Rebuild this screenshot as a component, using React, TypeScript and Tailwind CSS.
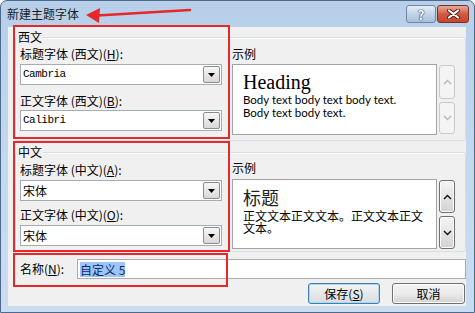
import type { ReactNode } from "react";

function Caret({ up, dim }: { up?: boolean; dim?: boolean }) {
  return (
    <svg width="9" height="6" viewBox="0 0 9 6">
      <polyline
        points={up ? "1,5 4.5,1.5 8,5" : "1,1 4.5,4.5 8,1"}
        fill="none"
        stroke={dim ? "#b8b8b8" : "#111"}
        strokeWidth="1.4"
      />
    </svg>
  );
}

function Spin({ up, dim, size }: { up?: boolean; dim?: boolean; size: string }) {
  return (
    <div
      className={`flex w-[16px] items-center justify-center rounded-[3px] border ${size} ${
        dim
          ? "border-[#c9c9c9] bg-[#f4f4f4]"
          : "border-[#707070] bg-gradient-to-b from-[#f5f5f5] to-[#d3d3d3] shadow-[inset_0_0_0_1px_#fcfcfc]"
      }`}
    >
      <Caret up={up} dim={dim} />
    </div>
  );
}

function Combo({ children, mono }: { children: ReactNode; mono?: boolean }) {
  return (
    <div className="flex h-[21px] w-[202px] items-center border border-[#a5acb5] bg-white pl-[2px] pr-[1px]">
      <span
        className={
          mono
            ? "font-['Liberation_Mono',monospace] text-[11px] tracking-[-0.5px]"
            : "leading-[16px]"
        }
      >
        {children}
      </span>
      <div className="ml-auto flex h-[17px] w-[17px] items-center justify-center rounded-[2px] border border-[#8a8c8e] bg-gradient-to-b from-[#f7f7f7] to-[#d8d8d8]">
        <svg width="7" height="4" viewBox="0 0 7 4">
          <polygon points="0,0 7,0 3.5,4" fill="#000" />
        </svg>
      </div>
    </div>
  );
}

function Label({ children, className = "" }: { children: ReactNode; className?: string }) {
  return <div className={`h-[16px] leading-[16px] ${className}`}>{children}</div>;
}

function Group({ title, children, className }: { title: string; children: ReactNode; className: string }) {
  return (
    <div
      className={`relative ml-[7px] w-[451px] rounded-[3px] border border-[#d5dfe5] shadow-[inset_1px_1px_0_#fff] ${className}`}
    >
      <span className="absolute left-[1px] top-[-9px] bg-[#f0f0f0] px-[1px] leading-[16px]">{title}</span>
      <div className="flex pl-[4px]">{children}</div>
    </div>
  );
}

function Button({ children, focused }: { children: ReactNode; focused?: boolean }) {
  return (
    <div
      className={`flex h-[21px] items-center justify-center rounded-[3px] border ${
        focused
          ? "w-[72px] border-[#3c7fb1] bg-gradient-to-b from-[#f4f4f4] to-[#d9dde0] shadow-[inset_0_0_0_1px_#a8d8f4]"
          : "w-[73px] border-[#707070] bg-gradient-to-b from-[#f3f3f3] via-[#ebebeb] to-[#d2d2d2] shadow-[inset_0_0_0_1px_#fbfbfb]"
      }`}
    >
      {children}
    </div>
  );
}

export default function App() {
  return (
    <div className="relative h-[313px] w-[475px] overflow-hidden bg-white font-['Noto_Sans_CJK_SC',sans-serif] text-[12px] text-black">
      <div className="flex h-full flex-col rounded-t-[7px] border border-[#4d6a8c] bg-gradient-to-b from-[#b7cfe9] via-[#c4d8ee] to-[#c9dcf0] px-[7px] pb-[6px] pr-[8px]">
        {/* title bar */}
        <div className="flex h-[26px] items-start">
          <span className="mt-[5px] leading-[16px] text-[#1a1a1a]" style={{ marginLeft: -1 }}>
            新建主题字体
          </span>
          <div className="ml-auto mr-[-3px] mt-[4px] flex gap-[1px]">
            <div className="flex h-[18px] w-[30px] items-center justify-center rounded-[3px] border border-[#6b86a6] bg-gradient-to-b from-[#e4edf7] via-[#c3d4e8] to-[#a9bfd9] text-[13px] font-bold leading-none text-white [text-shadow:0_0_1px_#27415f,0_0_1px_#27415f,0_0_1px_#27415f]">
              ?
            </div>
            <div className="flex h-[18px] w-[32px] items-center justify-center rounded-[3px] border border-[#7a2f25] bg-gradient-to-b from-[#e9a99a] via-[#d05a40] to-[#c8452c]">
              <svg width="13" height="10" viewBox="0 0 13 10">
                <path d="M2 1.5 L11 8.5 M11 1.5 L2 8.5" stroke="#5a1d14" strokeWidth="4" strokeLinecap="round" />
                <path d="M2 1.5 L11 8.5 M11 1.5 L2 8.5" stroke="#fff" strokeWidth="2.2" strokeLinecap="round" />
              </svg>
            </div>
          </div>
        </div>

        {/* client area */}
        <div className="flex h-[279px] w-[458px] flex-col bg-[#f0f0f0]">
          <Group title="西文" className="mt-[10px] h-[104px]">
            <div className="flex w-[202px] flex-col pt-[8px]">
              <Label>
                标题字体 (西文)(<u>H</u>):
              </Label>
              <div className="mt-[2px]">
                <Combo mono>Cambria</Combo>
              </div>
              <Label className="mt-[8px]">
                正文字体 (西文)(<u>B</u>):
              </Label>
              <div className="mt-[1px]">
                <Combo mono>Calibri</Combo>
              </div>
            </div>
            <div className="ml-[10px] flex flex-col pt-[8px]">
              <Label>示例</Label>
              <div className="mt-[2px] flex">
                <div className="h-[71px] w-[205px] border border-[#a3a3a3] bg-white pl-[10px] pt-[6px]">
                  <div className="font-['Liberation_Serif',serif] text-[20px] leading-[22px]">Heading</div>
                  <div className="font-['Lato',sans-serif] text-[11.5px] leading-[13px]">
                    Body text body text body text.
                    <br />
                    Body text body text.
                  </div>
                </div>
                <div className="ml-[2px] flex flex-col pt-[1px]">
                  <Spin up dim size="h-[34px]" />
                  <div className="mt-[3px]">
                    <Spin dim size="h-[32px]" />
                  </div>
                </div>
              </div>
            </div>
          </Group>

          <Group title="中文" className="mt-[11px] h-[100px]">
            <div className="flex w-[202px] flex-col pt-[9px]">
              <Label>
                标题字体 (中文)(<u>A</u>):
              </Label>
              <div className="mt-[2px]">
                <Combo>宋体</Combo>
              </div>
              <Label className="mt-[6px]">
                正文字体 (中文)(<u>O</u>):
              </Label>
              <div className="mt-[2px]">
                <Combo>宋体</Combo>
              </div>
            </div>
            <div className="ml-[10px] flex flex-col pt-[7px]">
              <Label>示例</Label>
              <div className="mt-[3px] flex">
                <div className="h-[70px] w-[205px] border border-[#a3a3a3] bg-white pl-[10px] pt-[6px]">
                  <div className="text-[18px] leading-[22px] text-[#222]">标题</div>
                  <div className="mt-[2px] leading-[12px]">
                    正文文本正文文本。正文文本正文
                    <br />
                    文本。
                  </div>
                </div>
                <div className="ml-[2px] flex flex-col pt-[1px]">
                  <Spin up size="h-[33px]" />
                  <div className="mt-[3px]">
                    <Spin size="h-[33px]" />
                  </div>
                </div>
              </div>
            </div>
          </Group>

          <div className="mt-[7px] flex h-[20px] items-center">
            <span className="ml-[12px] w-[57px] leading-[16px]">
              名称(<u>N</u>):
            </span>
            <div className="flex h-[20px] w-[389px] items-center border border-[#abadb3] bg-white pl-[2px]">
              <span className="bg-[#9cc6f6] leading-[15px] text-[#10286a]">自定义 5</span>
            </div>
          </div>

          <div className="mt-[4px] flex justify-end gap-[12px] pr-[1px]">
            <Button focused>
              保存(<u>S</u>)
            </Button>
            <Button>取消</Button>
          </div>
        </div>
      </div>

      {/* annotations */}
      <div className="absolute left-[13px] top-[25px] h-[114px] w-[217px] border-2 border-[#e5282c]" />
      <div className="absolute left-[13px] top-[141px] h-[111px] w-[217px] border-2 border-[#e5282c]" />
      <div className="absolute left-[13px] top-[253px] h-[34px] w-[215px] border-2 border-[#e5282c]" />
      <svg className="absolute left-0 top-0" width="200" height="30" viewBox="0 0 200 30">
        <path d="M97 15.5 L190 10" stroke="#e5282c" strokeWidth="2.5" strokeLinecap="round" />
        <polygon points="86,15 100,8 99,23" fill="#e5282c" />
      </svg>
    </div>
  );
}
